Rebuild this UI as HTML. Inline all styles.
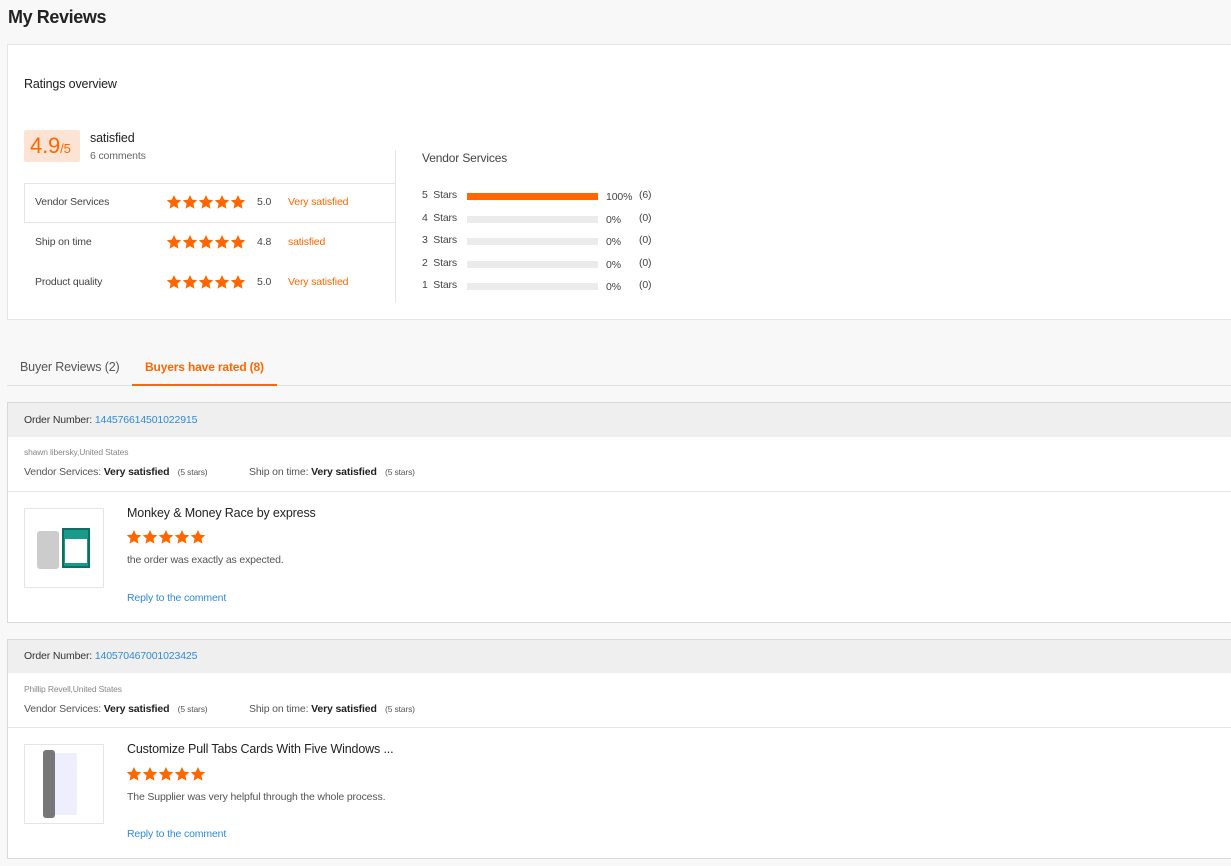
<!DOCTYPE html>
<html><head><meta charset="utf-8"><style>
*{box-sizing:border-box;margin:0;padding:0}
body{width:1231px;height:866px;overflow:hidden;background:#f8f8f8;font-family:"Liberation Sans",Arial,sans-serif;color:#333;position:relative;letter-spacing:-0.15px}
.a{position:absolute;white-space:nowrap}
.o{color:#f60}
.bl{color:#2f8bd8}
.bar{position:absolute;left:467px;width:131px;height:7px;background:#ebebeb}
</style></head><body>
<svg width="0" height="0" style="position:absolute"><defs><symbol id="s" viewBox="0 0 24 24"><path fill="#f60" d="M12 1.5l3.2 7 7.6.8-5.7 5.1 1.6 7.6L12 18.1 5.3 22l1.6-7.6L1.2 9.3l7.6-.8z"/></symbol></defs></svg>

<div class="a" style="left:8px;top:7px;font-size:18px;font-weight:bold;color:#222;letter-spacing:-0.4px">My Reviews</div>

<div class="a" style="left:7px;top:44px;width:1240px;height:276px;background:#fff;border:1px solid #e5e5e5"></div>
<div class="a" style="left:24px;top:77px;font-size:12.5px;color:#222">Ratings overview</div>
<div class="a" style="left:24px;top:130px;width:56px;height:32px;background:#fde3d3;border-radius:2px"></div>
<div class="a o" style="left:30px;top:133px;font-size:22px">4.9<span style="font-size:13px">/5</span></div>
<div class="a" style="left:90px;top:131px;font-size:12.5px;color:#222">satisfied</div>
<div class="a" style="left:90px;top:150px;font-size:10.5px;color:#666">6 comments</div>
<div class="a" style="left:395px;top:150px;width:1px;height:153px;background:#e5e5e5"></div>
<div class="a" style="left:24px;top:183px;width:372px;height:40px;border:1px solid #e5e5e5;border-right:none"></div>

<div class="a" style="left:35px;top:196px;font-size:10.5px;color:#444">Vendor Services</div>
<div class="a" style="left:166px;top:194px"><svg width="80" height="16"><use href="#s" x="0" width="16" height="16"/><use href="#s" x="16" width="16" height="16"/><use href="#s" x="32" width="16" height="16"/><use href="#s" x="48" width="16" height="16"/><use href="#s" x="64" width="16" height="16"/></svg></div>
<div class="a" style="left:257px;top:196px;font-size:10.5px;color:#444">5.0</div>
<div class="a o" style="left:288px;top:196px;font-size:10.5px">Very satisfied</div>

<div class="a" style="left:35px;top:236px;font-size:10.5px;color:#444">Ship on time</div>
<div class="a" style="left:166px;top:234px"><svg width="80" height="16"><use href="#s" x="0" width="16" height="16"/><use href="#s" x="16" width="16" height="16"/><use href="#s" x="32" width="16" height="16"/><use href="#s" x="48" width="16" height="16"/><use href="#s" x="64" width="16" height="16"/></svg></div>
<div class="a" style="left:257px;top:236px;font-size:10.5px;color:#444">4.8</div>
<div class="a o" style="left:288px;top:236px;font-size:10.5px">satisfied</div>

<div class="a" style="left:35px;top:276px;font-size:10.5px;color:#444">Product quality</div>
<div class="a" style="left:166px;top:274px"><svg width="80" height="16"><use href="#s" x="0" width="16" height="16"/><use href="#s" x="16" width="16" height="16"/><use href="#s" x="32" width="16" height="16"/><use href="#s" x="48" width="16" height="16"/><use href="#s" x="64" width="16" height="16"/></svg></div>
<div class="a" style="left:257px;top:276px;font-size:10.5px;color:#444">5.0</div>
<div class="a o" style="left:288px;top:276px;font-size:10.5px">Very satisfied</div>

<div class="a" style="left:422px;top:151px;font-size:12px;color:#444">Vendor Services</div>
<div class="a" style="left:422px;top:189px;font-size:10.5px;color:#444">5&nbsp; Stars</div><div class="bar" style="top:193px;background:#f60"></div><div class="a" style="left:606px;top:191px;font-size:10.5px;color:#444">100%</div><div class="a" style="left:639px;top:189px;font-size:10.5px;color:#444">(6)</div>
<div class="a" style="left:422px;top:212px;font-size:10.5px;color:#444">4&nbsp; Stars</div><div class="bar" style="top:216px"></div><div class="a" style="left:606px;top:214px;font-size:10.5px;color:#444">0%</div><div class="a" style="left:639px;top:212px;font-size:10.5px;color:#444">(0)</div>
<div class="a" style="left:422px;top:234px;font-size:10.5px;color:#444">3&nbsp; Stars</div><div class="bar" style="top:238px"></div><div class="a" style="left:606px;top:236px;font-size:10.5px;color:#444">0%</div><div class="a" style="left:639px;top:234px;font-size:10.5px;color:#444">(0)</div>
<div class="a" style="left:422px;top:257px;font-size:10.5px;color:#444">2&nbsp; Stars</div><div class="bar" style="top:261px"></div><div class="a" style="left:606px;top:259px;font-size:10.5px;color:#444">0%</div><div class="a" style="left:639px;top:257px;font-size:10.5px;color:#444">(0)</div>
<div class="a" style="left:422px;top:279px;font-size:10.5px;color:#444">1&nbsp; Stars</div><div class="bar" style="top:283px"></div><div class="a" style="left:606px;top:281px;font-size:10.5px;color:#444">0%</div><div class="a" style="left:639px;top:279px;font-size:10.5px;color:#444">(0)</div>

<div class="a" style="left:7px;top:385px;width:1230px;height:1px;background:#e0e0e0"></div>
<div class="a" style="left:20px;top:360px;font-size:12.5px;color:#555">Buyer Reviews (2)</div>
<div class="a o" style="left:145px;top:360px;font-size:12px;font-weight:bold">Buyers have rated (8)</div>
<div class="a" style="left:132px;top:384px;width:145px;height:2px;background:#f60"></div>

<!-- card 1 -->
<div class="a" style="left:7px;top:402px;width:1240px;height:221px;background:#fff;border:1px solid #d9d9d9"></div>
<div class="a" style="left:8px;top:403px;width:1240px;height:34px;background:#efefef"></div>
<div class="a" style="left:24px;top:414px;font-size:10.5px;color:#333">Order Number: <span class="bl">144576614501022915</span></div>
<div class="a" style="left:24px;top:447px;font-size:8.5px;color:#888">shawn libersky,United States</div>
<div class="a" style="left:24px;top:466px;font-size:10.5px;color:#555">Vendor Services: <b style="color:#222">Very satisfied</b>&nbsp;&nbsp; <span style="font-size:8.5px">(5 stars)</span></div>
<div class="a" style="left:249px;top:466px;font-size:10.5px;color:#555">Ship on time: <b style="color:#222">Very satisfied</b>&nbsp;&nbsp; <span style="font-size:8.5px">(5 stars)</span></div>
<div class="a" style="left:8px;top:491px;width:1240px;height:1px;background:#e5e5e5"></div>
<div class="a" style="left:24px;top:508px;width:80px;height:80px;border:1px solid #e5e5e5;background:#fff">
<div class="a" style="left:12px;top:22px;width:22px;height:38px;background:#ccc;border-radius:3px"></div>
<div class="a" style="left:37px;top:19px;width:28px;height:40px;background:#1a9a8a;border:2px solid #0d6e62"></div>
<div class="a" style="left:40px;top:30px;width:22px;height:24px;background:#fff"></div>
</div>
<div class="a" style="left:127px;top:506px;font-size:12.5px;color:#222">Monkey &amp; Money Race by express</div>
<div class="a" style="left:126px;top:529px"><svg width="80" height="16"><use href="#s" x="0" width="16" height="16"/><use href="#s" x="16" width="16" height="16"/><use href="#s" x="32" width="16" height="16"/><use href="#s" x="48" width="16" height="16"/><use href="#s" x="64" width="16" height="16"/></svg></div>
<div class="a" style="left:127px;top:554px;font-size:10.5px;color:#555">the order was exactly as expected.</div>
<div class="a bl" style="left:127px;top:592px;font-size:10.5px">Reply to the comment</div>

<!-- card 2 -->
<div class="a" style="left:7px;top:639px;width:1240px;height:220px;background:#fff;border:1px solid #d9d9d9"></div>
<div class="a" style="left:8px;top:640px;width:1240px;height:33px;background:#efefef"></div>
<div class="a" style="left:24px;top:650px;font-size:10.5px;color:#333">Order Number: <span class="bl">140570467001023425</span></div>
<div class="a" style="left:24px;top:684px;font-size:8.5px;color:#888">Phillip Revell,United States</div>
<div class="a" style="left:24px;top:703px;font-size:10.5px;color:#555">Vendor Services: <b style="color:#222">Very satisfied</b>&nbsp;&nbsp; <span style="font-size:8.5px">(5 stars)</span></div>
<div class="a" style="left:249px;top:703px;font-size:10.5px;color:#555">Ship on time: <b style="color:#222">Very satisfied</b>&nbsp;&nbsp; <span style="font-size:8.5px">(5 stars)</span></div>
<div class="a" style="left:8px;top:727px;width:1240px;height:1px;background:#e5e5e5"></div>
<div class="a" style="left:24px;top:744px;width:80px;height:80px;border:1px solid #e5e5e5;background:#fff">
<div class="a" style="left:18px;top:5px;width:12px;height:68px;background:#777;border-radius:3px"></div>
<div class="a" style="left:30px;top:8px;width:22px;height:62px;background:#eef"></div>
</div>
<div class="a" style="left:127px;top:742px;font-size:12.5px;color:#222">Customize Pull Tabs Cards With Five Windows ...</div>
<div class="a" style="left:126px;top:766px"><svg width="80" height="16"><use href="#s" x="0" width="16" height="16"/><use href="#s" x="16" width="16" height="16"/><use href="#s" x="32" width="16" height="16"/><use href="#s" x="48" width="16" height="16"/><use href="#s" x="64" width="16" height="16"/></svg></div>
<div class="a" style="left:127px;top:791px;font-size:10.5px;color:#555">The Supplier was very helpful through the whole process.</div>
<div class="a bl" style="left:127px;top:828px;font-size:10.5px">Reply to the comment</div>
</body></html>
